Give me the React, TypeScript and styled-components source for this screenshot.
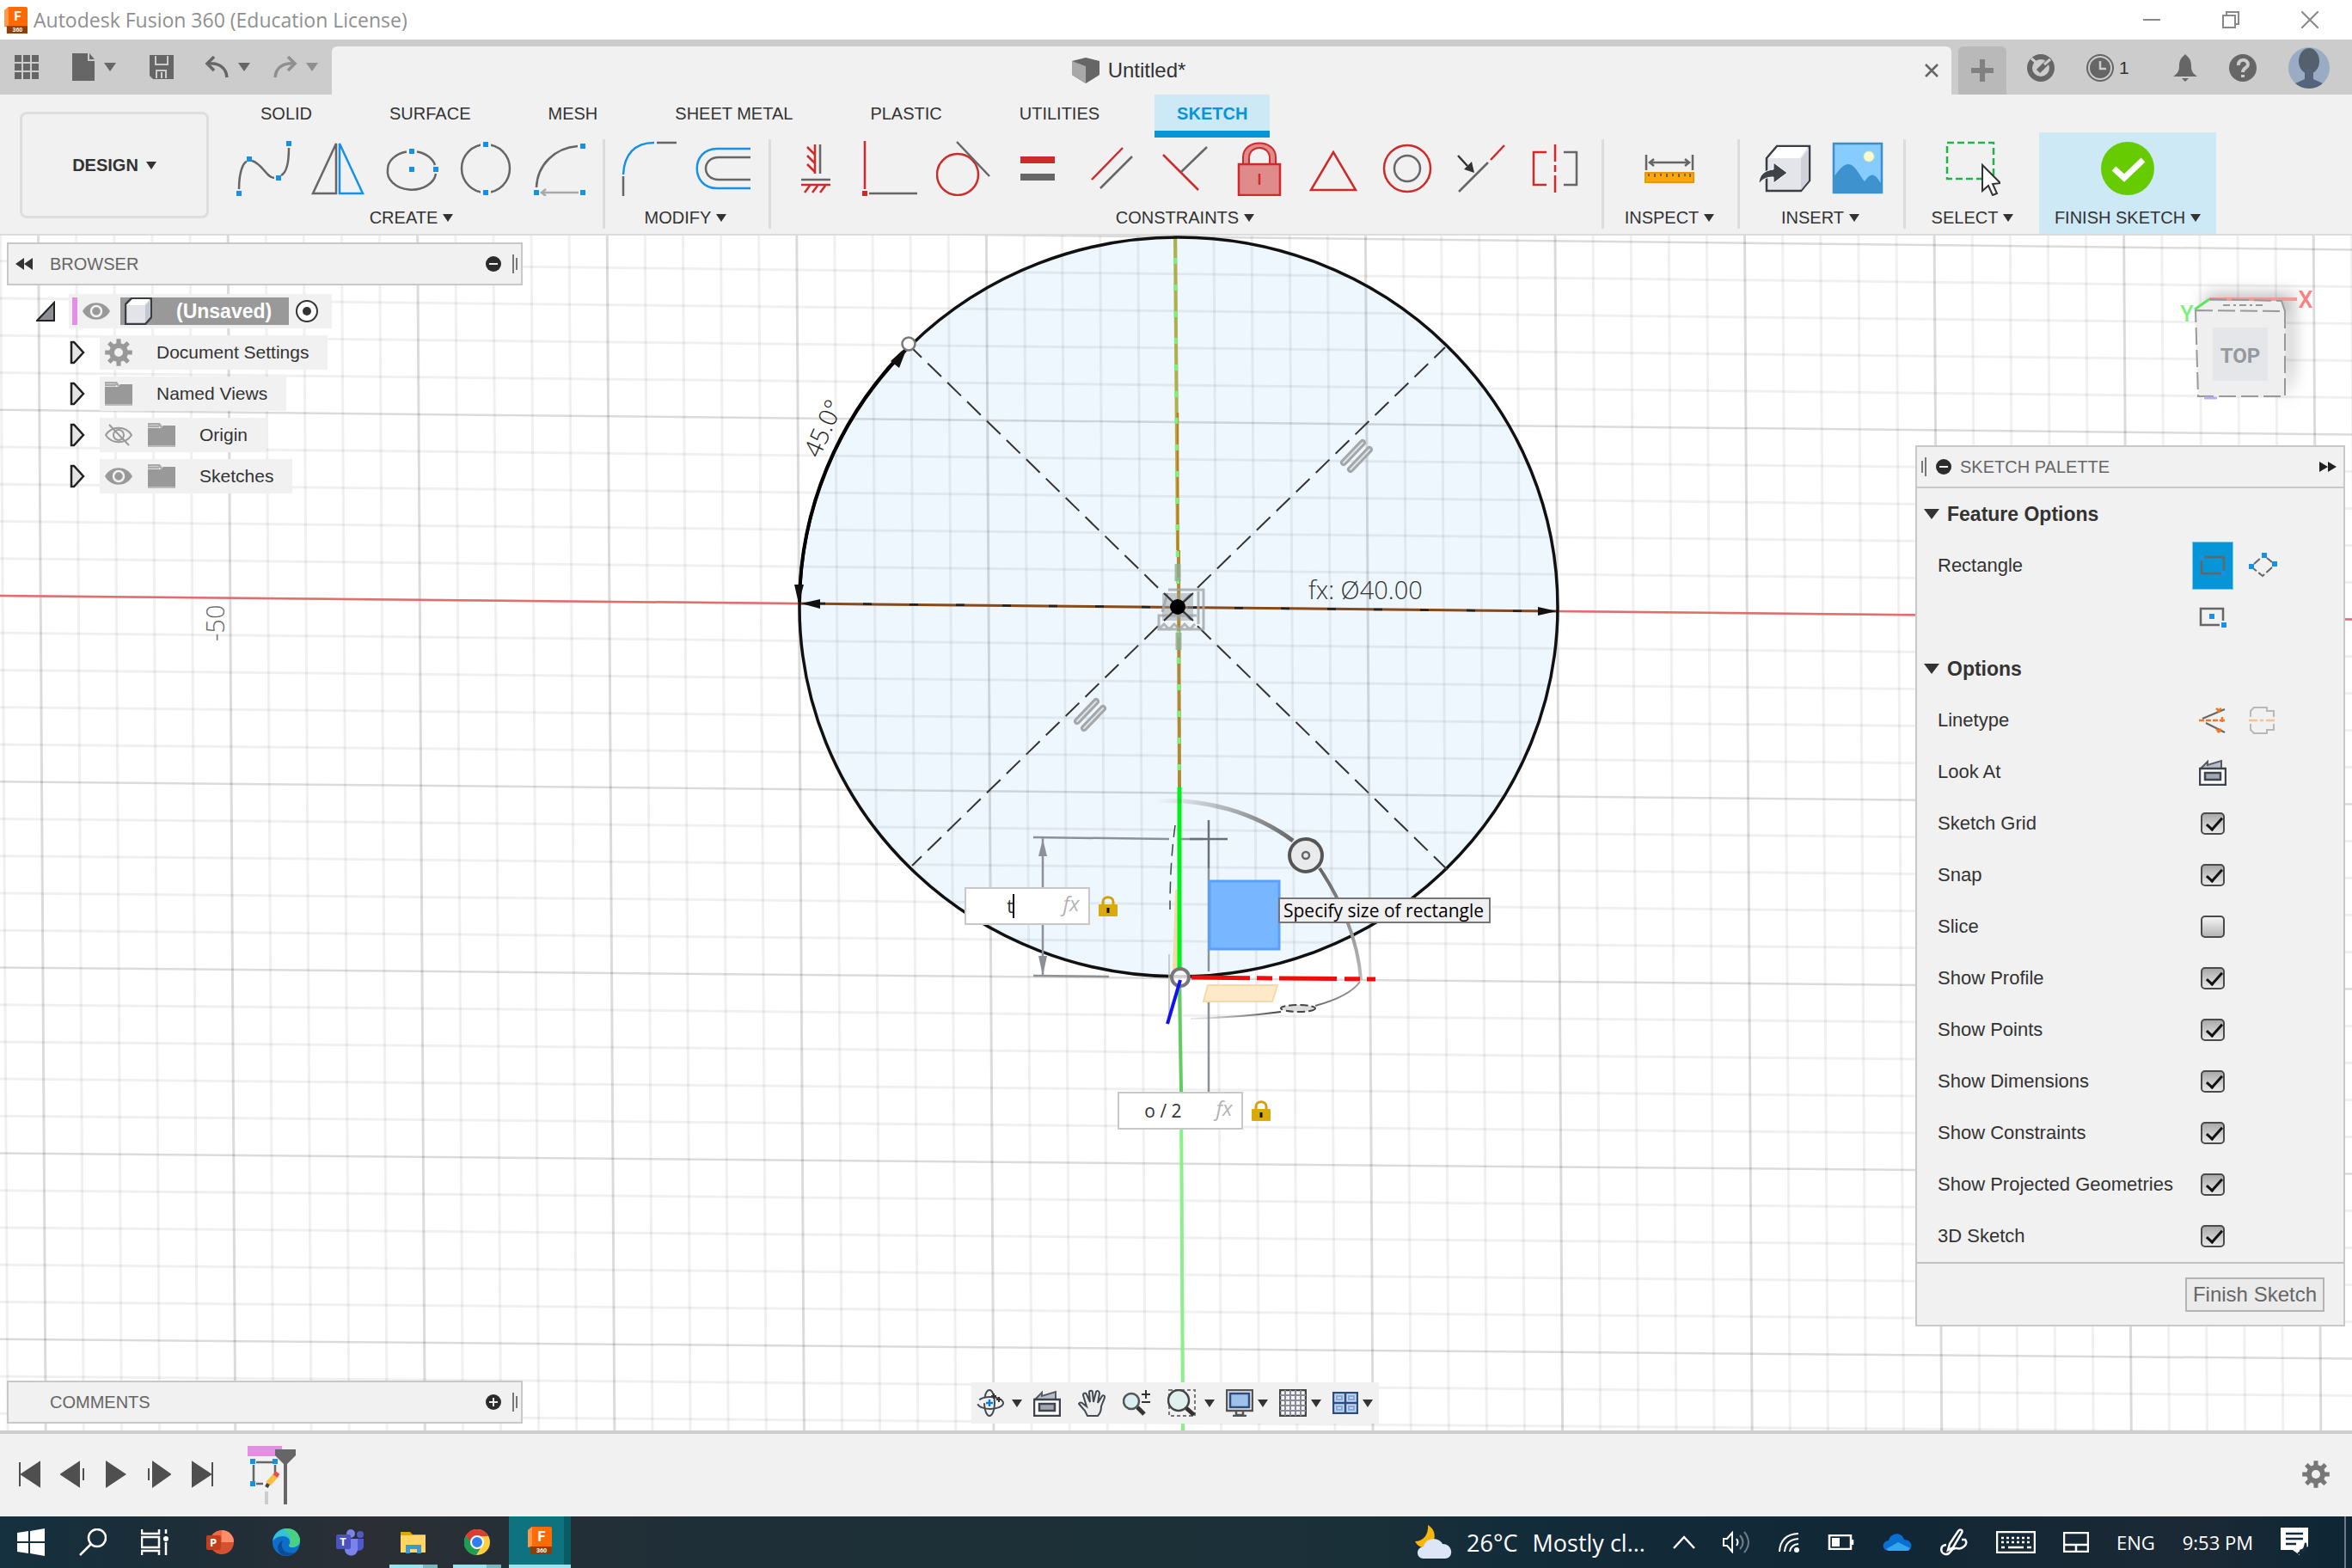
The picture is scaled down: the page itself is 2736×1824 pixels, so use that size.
import React from "react";
import styled, { createGlobalStyle, css } from "styled-components";

const UI = `"Liberation Sans", Arial, sans-serif`;
const SYS = `"Open Sans", "Noto Sans", sans-serif`;
const BLUE = "#1790e8";
const GREY = "#666";
const RED = "#cf2a2a";

const GlobalStyle = createGlobalStyle`
  * { box-sizing: border-box; }
  html, body { margin: 0; height: 100%; overflow: hidden; }
  button, input { font: inherit; color: inherit; margin: 0; padding: 0; border: 0; background: none; }
  svg { display: block; flex: none; }
`;

const Shell = styled.div`
  display: flex;
  flex-direction: column;
  height: 100vh;
  font-family: ${UI};
  font-size: 20px;
  color: #333;
  background: #f1f1f1;
`;

/* ---------- window frame ---------- */
const TitleBar = styled.header`
  display: flex;
  align-items: center;
  height: 46px;
  padding: 0 3px 0 5px;
  background: #fff;
`;
const AppTitle = styled.h1`
  flex: 1;
  margin: 0 0 0 7px;
  font: 400 23px/30px ${SYS};
  color: #8f8f8f;
`;
const WindowButton = styled.button`
  display: grid;
  place-items: center;
  width: 92px;
  height: 46px;
`;

const TabStrip = styled.div`
  display: flex;
  align-items: flex-end;
  height: 64px;
  background: #ccc;
`;
const QuickBar = styled.div`
  display: flex;
  align-items: center;
  width: 386px;
  height: 64px;
  padding-left: 16px;
`;
const QuickButton = styled.button<{ $w: number }>`
  display: flex;
  align-items: center;
  gap: 9px;
  width: ${(p) => p.$w}px;
  height: 56px;
`;
const DocTab = styled.div`
  flex: 1;
  display: flex;
  align-items: center;
  justify-content: center;
  gap: 10px;
  position: relative;
  height: 56px;
  background: #f1f1f1;
  border-radius: 6px 6px 0 0;
  font-size: 24px;
  padding-right: 30px;
`;
const DocClose = styled.button`
  position: absolute;
  right: 10px;
  top: 14px;
  width: 26px;
  height: 28px;
  display: grid;
  place-items: center;
`;
const NewTab = styled.button`
  display: grid;
  place-items: center;
  width: 56px;
  height: 56px;
  margin: 0 16px 0 8px;
  background: #b9b9b9;
  border-radius: 6px 6px 0 0;
`;
const Account = styled.div`
  display: flex;
  align-items: center;
  justify-content: space-between;
  width: 364px;
  height: 56px;
  margin-right: 22px;
  padding: 0 4px 6px 8px;
`;
const AccountButton = styled.button<{ $wide?: boolean }>`
  display: flex;
  align-items: center;
  gap: 6px;
  margin-right: ${(p) => (p.$wide ? 14 : 0)}px;
  font-size: 21px;
`;

/* ---------- ribbon ---------- */
const Ribbon = styled.div`
  display: flex;
  height: 164px;
  border-bottom: 2px solid #dcdcdc;
`;
const Workspace = styled.button`
  display: flex;
  align-items: center;
  justify-content: center;
  gap: 9px;
  width: 220px;
  height: 124px;
  margin: 20px 16px 0 23px;
  border: 3px solid #dedede;
  border-radius: 8px;
  font-weight: 700;
`;
const RibbonBody = styled.div`
  display: flex;
  flex-direction: column;
`;
const Tabs = styled.nav`
  display: flex;
  gap: 38px;
  height: 50px;
  padding-left: 18px;
`;
const Tab = styled.button<{ $active?: boolean }>`
  height: 50px;
  padding: 2px 26px 0;
  border-bottom: 8px solid transparent;
  ${(p) =>
    p.$active &&
    css`
      font-weight: 700;
      color: #0696d7;
      background: #cce9f5;
      border-color: #0696d7;
    `}
`;
const Groups = styled.div`
  display: flex;
  align-items: flex-start;
  height: 112px;
`;
const Group = styled.section<{ $w: number; $line?: boolean; $on?: boolean }>`
  display: flex;
  flex-direction: column;
  align-items: center;
  position: relative;
  width: ${(p) => p.$w}px;
  height: ${(p) => (p.$on ? 118 : 112)}px;
  margin-top: ${(p) => (p.$on ? -6 : 0)}px;
  padding-top: ${(p) => (p.$on ? 10 : 4)}px;
  padding-right: ${(p) => (p.$line ? 6 : 0)}px;
  background: ${(p) => (p.$on ? "#cce9f5" : "none")};
  ${(p) =>
    p.$line &&
    css`
      &::after {
        content: "";
        position: absolute;
        right: 0;
        top: 2px;
        bottom: 6px;
        width: 3px;
        background: #dcdcdc;
      }
    `}
`;
const Tools = styled.div`
  display: flex;
`;
const Tool = styled.button`
  display: grid;
  place-items: center;
  width: 86px;
  height: 64px;
`;
const GroupLabel = styled.button`
  display: flex;
  align-items: center;
  gap: 6px;
  height: 24px;
  margin-top: 13px;
`;
const Caret = styled.span<{ $c?: string; $s?: number }>`
  display: inline-block;
  width: 0;
  height: 0;
  border: ${(p) => p.$s ?? 5}px solid transparent;
  border-bottom: 0;
  border-top: ${(p) => (p.$s ?? 5) + 3}px solid ${(p) => p.$c ?? "#333"};
`;

/* ---------- canvas ---------- */
const Canvas = styled.main`
  flex: 1;
  position: relative;
  min-height: 0;
  overflow: hidden;
  background: #fff;
  border-bottom: 4px solid #ccc;
`;
const Drawing = styled.svg`
  position: absolute;
  left: 0;
  top: 0;
  width: 100%;
  height: 100%;
`;

const sidePanel = css`
  position: absolute;
  left: 8px;
  width: 600px;
`;
const Browser = styled.aside`
  ${sidePanel}
  top: 8px;
`;
const Comments = styled.aside`
  ${sidePanel}
  bottom: 8px;
`;
const PanelBar = styled.div`
  display: flex;
  align-items: center;
  height: 50px;
  padding: 0 3px 0 8px;
  border: 2px solid #c8c8c8;
  background: #f1f1f1;
  color: #666;
`;
const PanelTitle = styled.h2`
  flex: 1;
  margin: 0 0 0 20px;
  font-size: 20px;
  font-weight: 400;
`;
const CommentTitle = styled(PanelTitle)`
  margin-left: 40px;
`;
const BarButton = styled.button`
  display: grid;
  place-items: center;
  margin-right: 12px;
`;
const Tree = styled.ul`
  display: flex;
  flex-direction: column;
  gap: 8px;
  margin: 10px 0 0;
  padding: 0 0 0 72px;
  list-style: none;
  font-size: 21px;
`;
const RootRow = styled.li`
  display: flex;
  align-items: center;
  height: 40px;
  margin-left: -38px;
`;
const RootBody = styled.div`
  display: flex;
  align-items: center;
  gap: 6px;
  width: 306px;
  height: 40px;
  margin-left: 16px;
  padding-left: 4px;
  background: #f1f1f1;
`;
const RootMark = styled.span`
  width: 6px;
  height: 32px;
  background: #e38fe3;
`;
const RootName = styled.button`
  display: flex;
  align-items: center;
  gap: 28px;
  width: 196px;
  height: 32px;
  margin: 0 2px 0 6px;
  padding-left: 5px;
  background: #999;
  color: #fff;
  font-weight: 700;
  font-size: 23px;
`;
const Node = styled.li`
  display: flex;
  align-items: center;
  gap: 16px;
  height: 40px;
`;
const NodeBody = styled.button`
  display: flex;
  align-items: center;
  gap: 18px;
  height: 40px;
  padding: 0 22px 0 6px;
  background: #f1f1f1;
`;
const NodeName = styled.span`
  margin-left: 10px;
`;

/* ---------- sketch palette ---------- */
const Palette = styled.aside`
  position: absolute;
  right: 8px;
  top: 244px;
  width: 500px;
  border: 2px solid #c8c8c8;
  background: #f1f1f1;
  font-size: 22px;
`;
const PaletteBar = styled.div`
  display: flex;
  align-items: center;
  gap: 10px;
  height: 48px;
  padding: 0 8px 0 4px;
  border-bottom: 2px solid #c8c8c8;
  color: #666;
`;
const PaletteTitle = styled(PanelTitle)`
  margin: 0;
`;
const Heading = styled.button`
  display: flex;
  align-items: center;
  gap: 9px;
  width: 100%;
  height: 60px;
  padding-left: 8px;
  font-weight: 700;
  font-size: 23px;
`;
const Row = styled.div`
  display: grid;
  grid-template-columns: 291px 1fr;
  align-items: start;
  padding-left: 24px;
`;
const RowLabel = styled.label`
  line-height: 60px;
`;
const Cells = styled.div`
  display: grid;
  grid-template-columns: 58px 58px;
  grid-auto-rows: 60px;
`;
const Cell = styled.button<{ $on?: boolean }>`
  display: grid;
  place-items: center;
  place-self: center;
  width: 46px;
  height: 54px;
  ${(p) => p.$on && "background: #0696d7; outline: 1px solid #7cc7ea;"}
`;
const Check = styled.input`
  appearance: none;
  position: relative;
  place-self: center;
  width: 28px;
  height: 26px;
  border: 2px solid #4a4a4a;
  border-radius: 5px;
  background: linear-gradient(#f4f4f4, #b4b4b4);
  &:checked {
    background: linear-gradient(#a9a9a9, #e9e9e9);
  }
  &:checked::after {
    content: "";
    position: absolute;
    left: 9px;
    top: 0;
    width: 7px;
    height: 16px;
    border: solid #111;
    border-width: 0 3px 3px 0;
    transform: rotate(42deg);
  }
`;
const PaletteFooter = styled.div`
  display: flex;
  justify-content: flex-end;
  padding: 16px 22px 15px;
  border-top: 2px solid #c0c0c0;
`;
const FinishButton = styled.button`
  height: 40px;
  padding: 0 7px;
  border: 2px solid #b4b4b4;
  background: #ebebeb;
  color: #666;
  font-size: 24px;
`;

/* ---------- things pinned to the sketch ---------- */
const Pin = styled.div<{ $x: number; $y: number }>`
  position: absolute;
  left: ${(p) => p.$x}px;
  top: ${(p) => p.$y}px;
  display: flex;
  align-items: center;
  gap: 10px;
`;
const Field = styled.label`
  position: relative;
  display: flex;
  align-items: center;
  width: 146px;
  height: 44px;
  border: 2px solid #c8c8c8;
  background: #fff;
`;
const FieldInput = styled.input`
  width: 102px;
  height: 40px;
  text-align: center;
  font-family: ${SYS};
  font-size: 21px;
  outline: none;
`;
const Fx = styled.span`
  width: 40px;
  text-align: center;
  font: italic 24px/34px ${SYS};
  height: 40px;
  color: #b4b4b4;
`;
const TextCursor = styled.span`
  position: absolute;
  left: 54px;
  top: 6px;
  width: 2px;
  height: 28px;
  background: #000;
`;
const Tip = styled.div`
  height: 30px;
  padding: 0 6px 0 4px;
  border: 2px solid #767676;
  background: #f0f0f0;
  color: #000;
  font: 21px/26px ${SYS};
  white-space: nowrap;
`;
const NavBar = styled.div`
  position: absolute;
  left: 50%;
  bottom: 8px;
  margin-left: -238px;
  display: flex;
  align-items: center;
  width: 474px;
  height: 48px;
  padding-left: 6px;
  background: #f1f1f1;
`;
const NavButton = styled.button<{ $menu?: boolean; $wide?: boolean }>`
  display: flex;
  align-items: center;
  gap: ${(p) => (p.$wide ? 9 : 5)}px;
  margin-right: ${(p) => (p.$menu ? 13 : 20)}px;
`;

/* ---------- timeline ---------- */
const Timeline = styled.footer`
  display: flex;
  align-items: center;
  height: 96px;
  padding: 0 26px 2px 20px;
`;
const Playback = styled.div`
  display: flex;
  gap: 21px;
  width: 268px;
`;
const Spacer = styled.div`
  flex: 1;
`;

/* ---------- taskbar ---------- */
const Taskbar = styled.div`
  display: flex;
  height: 60px;
  background: linear-gradient(90deg, #15303f 0, #1a2e39 160px, #2b2f35 430px, #1f2f37 800px, #1a3038 1600px, #132c3a 1760px, #112735 2200px, #1b2935 2560px, #0f2735 2700px);
  color: #fff;
  font-family: ${SYS};
`;
const TaskButton = styled.button<{ $w: number; $on?: boolean }>`
  position: relative;
  display: grid;
  place-items: center;
  width: ${(p) => p.$w}px;
  height: 60px;
  ${(p) => p.$on && "background: linear-gradient(90deg, #0f737f 64px, #0b5b65 64px); border-bottom: 4px solid #9be4ee;"}
`;
const Running = styled.i`
  position: absolute;
  left: 9px;
  right: 9px;
  bottom: 0;
  height: 4px;
  background: linear-gradient(90deg, #9be4ee 70%, #7ab6be 70%);
`;
const Tray = styled.div`
  display: flex;
  align-items: center;
  gap: 32px;
  padding-right: 40px;
  border-right: 2px solid #6e7a83;
  margin-right: 7px;
`;
const Weather = styled.button`
  display: flex;
  align-items: center;
  gap: 17px;
  font-size: 27px;
`;
const TrayButton = styled.button`
  display: grid;
  place-items: center;
  height: 60px;
  font-size: 22px;
`;

/* ---------- icon helpers ---------- */
type IconProps = { w?: number; h?: number; children: React.ReactNode };
const Icon = ({ w = 64, h = w, children }: IconProps) => (
  <svg width={w} height={h} viewBox={`0 0 ${w} ${h}`} fill="none" stroke={GREY} strokeWidth="2.5" aria-hidden="true">
    {children}
  </svg>
);
const Dots = ({ at }: { at: [number, number][] }) => (
  <>
    {at.map(([x, y]) => (
      <rect key={`${x},${y}`} x={x - 3} y={y - 3} width="6" height="6" fill={BLUE} stroke="none" />
    ))}
  </>
);

const createTools: [string, React.ReactNode][] = [
  ["Spline", <><path d="M3 56C3 36 8 25 12 24M18 23C30 26 35 43 44 43M52 40C60 36 61 20 61 8" /><Dots at={[[3, 61], [15, 21], [49, 43], [61, 3]]} /></>],
  ["Mirror", <><path d="M30 3V61H3Z" /><path d="M34 3V61H61Z" stroke={BLUE} /></>],
  ["Ellipse", <><path d="M38 12.500A28 21 0 0 1 59 28M60 38A28 21 0 0 1 4 33A28 21 0 0 1 26 12.500" /><Dots at={[[32, 12], [32, 33], [60, 33]]} /></>],
  ["Circle", <><circle cx="32" cy="32" r="28" /><path d="M26 4H38M26 60H38" stroke="#f1f1f1" strokeWidth="5" /><Dots at={[[32, 4], [32, 60]]} /></>],
  ["Arc", <><path d="M5 54C6 28 26 8 53 6" /><path d="M12 60H54M16 56L11 60L16 64" stroke="#aaa" /><Dots at={[[5, 60], [59, 60], [59, 6]]} /></>],
];
const modifyTools: [string, React.ReactNode][] = [
  ["Fillet", <><path d="M2 39C3 16 15 2 38 2" stroke={BLUE} /><path d="M2 41V64M41 2H64" /></>],
  ["Offset", <><path d="M64 9H25C-6 9-6 55 25 55H64" stroke={BLUE} /><path d="M64 19H27C7 19 7 45 27 45H64" /></>],
];
const constraintTools: [string, React.ReactNode][] = [
  ["Horizontal/Vertical", <><path d="M31 4V38M22 7L31 16M22 17L31 26M22 27L31 36M15 51H49M19 60L25 52M28 60L34 52M37 60L43 52" stroke={RED} /><path d="M37 4V38M15 45H49" /></>],
  ["Coincident", <><path d="M3 0V56" stroke={RED} /><path d="M8 61H64" /><rect x="0" y="58" width="6" height="6" fill={RED} stroke="none" /></>],
  ["Tangent", <><circle cx="25" cy="39" r="24" stroke={RED} /><path d="M24 1L62 41" /></>],
  ["Equal", <><rect x="12" y="18" width="40" height="8" fill={RED} stroke="none" /><rect x="12" y="38" width="40" height="8" fill={GREY} stroke="none" /></>],
  ["Parallel", <><path d="M9 45L45 8" stroke={RED} /><path d="M19 55L56 18" /></>],
  ["Perpendicular", <><path d="M6 16L47 57" stroke={RED} /><path d="M27 36L57 7" /></>],
  ["Fix", <><path d="M13 27V19C13-3 51-3 51 19V27H44V20C44 4 20 4 20 20V27" stroke={RED} fill="#df8b8b" strokeWidth="2" /><rect x="8" y="27" width="48" height="36" stroke={RED} fill="#df8b8b" /><path d="M32 38V51" stroke={RED} /></>],
  ["Midpoint", <path d="M32 13L58 57H6Z" stroke={RED} />],
  ["Concentric", <><circle cx="32" cy="32" r="27" stroke={RED} /><circle cx="32" cy="32" r="15" /></>],
  ["Collinear", <><path d="M6 59L40 25" /><path d="M43 22L59 5" stroke={RED} /><path d="M5 17L16 29" stroke="#333" /><path d="M24 37L12 33L21 24Z" fill="#333" stroke="none" /></>],
  ["Symmetry", <><path d="M22 13H7V51H22M32 4V24M32 28V36M32 40V60" stroke={RED} /><path d="M42 13H57V51H42" /></>],
];
const measureTool: [string, React.ReactNode] = ["Measure", <><path d="M5 16V34M59 16V34M9 25H55M14 21L9 25L14 29M50 21L55 25L50 29" /><rect x="4" y="37" width="56" height="11" fill="#fda60a" stroke="#e8960a" strokeWidth="2" /><path d="M8 38V41M15 38V42M22 38V41M29 38V42M36 38V41M43 38V42M50 38V41M56 38V42" strokeWidth="2" /></>];
const insertTools: [string, React.ReactNode][] = [
  ["Insert Derive", <><path d="M12 20L24 6H62V46L52 58H12Z" fill="#e4e5ea" stroke="#3a3d44" /><path d="M14 20L25 7H60L51 20Z" fill="#fff" stroke="none" /><path d="M52 21L61 9V46L52 57Z" fill="#cfd0d8" stroke="none" /><path d="M3 50C3 40 9 34 20 33V25L36 37L20 49V42C13 42 7 44 3 50Z" fill="#3f4248" stroke="#fff" strokeWidth="1" /></>],
  ["Canvas", <><rect x="4" y="3" width="56" height="57" fill="#86ccff" stroke="#3b8fcb" /><path d="M4 60V42C10 34 15 27 21 27C29 27 34 40 40 47C44 41 48 38 51 40C55 42 57 47 60 50V60Z" fill="#3e93ce" stroke="none" /><circle cx="45" cy="18" r="6" fill="#fdfbd0" stroke="#d9edb8" strokeWidth="1" /></>],
];
const selectTool: [string, React.ReactNode] = ["Select", <><rect x="2" y="2" width="54" height="42" stroke="#21b24b" strokeDasharray="8 4" /><path d="M43 28V58L50 52L55 63L60 61L55 50L64 49Z" fill="#fff" stroke="#333" strokeWidth="2" /></>];
const finishTool: [string, React.ReactNode] = ["Finish Sketch", <><circle cx="32" cy="32" r="31" fill="#66cb00" stroke="none" /><path d="M16 32L28 43L50 22" stroke="#fff" strokeWidth="7" /></>];

const groups: { label: string; w: number; tools: [string, React.ReactNode][]; line?: boolean; on?: boolean }[] = [
  { label: "CREATE", w: 445, tools: createTools, line: true },
  { label: "MODIFY", w: 193, tools: modifyTools, line: true },
  { label: "CONSTRAINTS", w: 969, tools: constraintTools, line: true },
  { label: "INSPECT", w: 158, tools: [measureTool], line: true },
  { label: "INSERT", w: 193, tools: insertTools, line: true },
  { label: "SELECT", w: 155, tools: [selectTool] },
  { label: "FINISH SKETCH", w: 206, tools: [finishTool], on: true },
];
const tabs = ["SOLID", "SURFACE", "MESH", "SHEET METAL", "PLASTIC", "UTILITIES", "SKETCH"];

const FusionLogo = ({ s = 28 }: { s?: number }) => (
  <svg width={s} height={s + 4} viewBox="0 0 28 32" aria-hidden="true">
    <path d="M0 4L5 0H26Q28 0 28 2V32H3V24L0 23Z" fill="#ff6b00" />
    <path d="M0 4L5 0V22L0 24Z" fill="#ff9a4d" />
    <path d="M3 23H28V32H3Z" fill="#8f3f05" />
    <text x="16" y="17" fontSize="16" fontWeight="700" fill="#fff" textAnchor="middle" fontFamily="Roboto, sans-serif">F</text>
    <text x="16" y="30" fontSize="7" fontWeight="700" fill="#fff" textAnchor="middle" fontFamily="Roboto, sans-serif">360</text>
  </svg>
);
const Eye = ({ off }: { off?: boolean }) => (
  <Icon w={32} h={26}>
    {off ? (
      <>
        <path d="M1 13C8 2 24 2 31 13C24 24 8 24 1 13Z" stroke="#999" strokeWidth="2" />
        <circle cx="16" cy="13" r="6" stroke="#999" strokeWidth="2" />
        <path d="M5 1L28 25" stroke="#999" strokeWidth="2" />
      </>
    ) : (
      <>
        <path d="M0 13C7 0 25 0 32 13C25 26 7 26 0 13Z" fill="#999" stroke="none" />
        <circle cx="16" cy="13" r="6" stroke="#f1f1f1" strokeWidth="2.5" />
      </>
    )}
  </Icon>
);
const Folder = () => (
  <Icon w={32} h={28}>
    <path d="M0 1H13L16 5M0 1V4H13" stroke="#aaa" />
    <path d="M0 6H15L18 3H32V26H0Z" fill="#999" stroke="none" />
    <path d="M0 27H32" stroke="#bbb" strokeWidth="2" />
  </Icon>
);
const gearPath = (teeth: number, ro: number, ri: number, c: number) => {
  const pts: string[] = [];
  for (let i = 0; i < teeth; i++) {
    [[-0.3, ri], [-0.2, ro], [0.2, ro], [0.3, ri]].forEach(([f, r]) => {
      const a = ((i + f) / teeth) * Math.PI * 2;
      pts.push(`${(c + r * Math.sin(a)).toFixed(1)} ${(c - r * Math.cos(a)).toFixed(1)}`);
    });
  }
  return `M${pts.join("L")}Z`;
};
const Gear = ({ fill = "#999" }: { fill?: string }) => (
  <Icon w={32}>
    <path d={gearPath(8, 16, 11, 16)} fill={fill} stroke="none" />
    <circle cx="16" cy="16" r="5" fill="#f1f1f1" stroke="none" />
  </Icon>
);
const Expander = () => (
  <Icon w={20} h={28}><path d="M3 2H6L17 14L6 26H3Z" fill="#e4e4e6" stroke="#222" /></Icon>
);
const Grip = ({ flip }: { flip?: boolean }) => (
  <Icon w={8} h={24}><path d={flip ? "M6 1V23M2 5V19" : "M2 1V23M6 5V19"} stroke="#777" strokeWidth="2" /></Icon>
);
const Round = ({ plus }: { plus?: boolean }) => (
  <Icon w={18}><circle cx="9" cy="9" r="9" fill="#2b2b2b" stroke="none" /><path d={plus ? "M4 9H14M9 4V14" : "M4 9H14"} stroke="#eee" strokeWidth="2" /></Icon>
);
const Padlock = () => (
  <Icon w={22} h={24}><path d="M5 12V7C5 0 17 0 17 7V12" stroke="#d2a008" strokeWidth="3" /><rect y="10" width="22" height="14" rx="1" fill="#dba90b" stroke="none" /><path d="M11 14V20" stroke="#111" strokeWidth="3" /></Icon>
);
const LookAt = () => (
  <Icon w={32}><path d="M2 12L10 4V8L26 3V11" fill="#b9bdc8" stroke="#555a63" strokeWidth="2" /><rect x="1" y="12" width="30" height="19" fill="#fff" stroke="#3f434b" /><rect x="7" y="17" width="18" height="8" fill="#a3a7b2" stroke="#3f434b" /></Icon>
);

/* ---------- sketch drawing ---------- */
const gridV = Array.from({ length: 64 }, (_, n) => n);
const gridH = Array.from({ length: 36 }, (_, n) => n - 10);
const EqualMark = ({ x, y }: { x: number; y: number }) => (
  <g transform={`translate(${x} ${y})`} strokeLinecap="round">
    <path d="M4 27L26 4M12 35L34 12" stroke="#a3a7a9" strokeWidth="8" />
    <path d="M4 27L26 4M12 35L34 12" stroke="#dbe3e8" strokeWidth="2" />
  </g>
);
const Sketch = () => (
  <Drawing viewBox="0 274 2736 1390" preserveAspectRatio="xMinYMin slice" fill="none">
    <defs>
      <filter id="soft" x="-50%" y="-50%" width="200%" height="200%"><feGaussianBlur stdDeviation="9" /></filter>
      <linearGradient id="arc" x1="1345" y1="930" x2="1504" y2="978" gradientUnits="userSpaceOnUse"><stop stopColor="#777" stopOpacity="0" /><stop offset="1" stopColor="#666" /></linearGradient>
      <linearGradient id="arc2" x1="1535" y1="1010" x2="1582" y2="1140" gradientUnits="userSpaceOnUse"><stop stopColor="#666" /><stop offset="1" stopColor="#bbb" /></linearGradient>
      <linearGradient id="arc3" x1="1582" y1="1142" x2="1385" y2="1185" gradientUnits="userSpaceOnUse"><stop stopColor="#999" /><stop offset="0.5" stopColor="#444" /><stop offset="1" stopColor="#999" stopOpacity="0.2" /></linearGradient>
    </defs>
    <ellipse cx="1371" cy="706" rx="441" ry="430" fill="#eff7fe" />
    {gridV.map((n) => {
      const x = 0.5 + n * 44.11;
      return <path key={n} d={`M${x} 274L${x + 8.6} 1664`} stroke="#000" strokeOpacity={n % 5 === 1 ? 0.14 : 0.06} strokeWidth="3" />;
    })}
    {gridH.map((n) => (
      <path key={n} d={`M0 ${693 + n * 43.24}L2736 ${720.5 + n * 43}`} stroke="#000" strokeOpacity={n % 5 === 0 ? 0.14 : 0.06} strokeWidth={n % 5 === 0 ? 2.5 : 3} />
    ))}
    <path d="M0 693L930 702M1812 711L2736 720.5" stroke="#e26d6d" strokeWidth="2.5" />
    <path d="M930 702L1812 711" stroke="#8a4a18" strokeWidth="3" />
    <path d="M950 702L1790 711" stroke="#222" strokeWidth="2.5" strokeDasharray="10 44" />
    <path d="M1367 274L1370 640" stroke="#aeb04a" strokeWidth="4" />
    <path d="M1370 480L1370 640M1371 770L1372 920" stroke="#c07d1c" strokeWidth="2.5" />
    <path d="M1371 640L1372 920" stroke="#b08a30" strokeWidth="4" />
    <path d="M1367 300L1372 930" stroke="#7ef07e" strokeWidth="4" strokeDasharray="7 24" />
    <path d="M1372 1148L1374 1270" stroke="#5fce5f" strokeWidth="4" />
    <path d="M1374 1270L1376 1664" stroke="#8af08a" strokeWidth="4" />
    <ellipse cx="1371" cy="706" rx="441" ry="430" stroke="#111" strokeWidth="3.5" />
    <g stroke="#333" strokeWidth="2" strokeDasharray="22 10">
      <path d="M1370 706L1058 402M1370 706L1681 404M1370 706L1061 1007M1370 706L1684 1012" />
    </g>
    <path d="M930 700A441 430 0 0 1 1050 410" stroke="#000" strokeWidth="4" />
    <path d="M1056 402L1046 428L1036 420ZM929 702L924 680H935ZM932 702L954 697V708ZM1811 711L1789 706V716Z" fill="#111" />
    <circle cx="1057" cy="400" r="7.500" fill="#fff" stroke="#777" strokeWidth="2.5" />

    <EqualMark x={1559} y={511} />
    <EqualMark x={1249} y={812} />
    <g stroke="#a0a4a6" strokeWidth="3">
      <path d="M1359 686H1400V732H1348V716H1392M1394 688V726M1348 732L1354 726L1360 732L1366 726L1372 732L1378 726L1384 732L1390 726M1352 712L1358 690" strokeOpacity="0.8" />
      <path d="M1370 656V676M1371 736V756" stroke="#8fae92" strokeWidth="7" strokeOpacity="0.8" />
    </g>
    <path d="M1352 690H1388V722H1352Z" fill="#9aa0a2" fillOpacity="0.5" />
    <path d="M1354 690L1388 722M1388 690L1354 722" stroke="#333" strokeWidth="2" />
    <circle cx="1370" cy="706" r="9" fill="#000" />

    <g stroke="#8b9196" strokeWidth="2.5">
      <path d="M1202 974L1360 976M1372 976H1400M1202 1135L1290 1136M1213 975V1135" />
      <path d="M1384 976H1428M1406 954V1010" stroke="#6a7075" />
      <path d="M1406 1010V1130M1406 1149V1270" />
    </g>
    <path d="M1213 976L1218 996H1208ZM1213 1135L1218 1112H1208Z" fill="#8b9196" />
    <path d="M1367 960C1363 990 1361 1020 1361 1058" stroke="#444" strokeWidth="1.5" strokeDasharray="14 8" />
    <path d="M1367 1035H1372V1130H1364Z" fill="#f6d9a8" />
    <path d="M1372 916V1126" stroke="#00f01a" strokeWidth="5" />
    <path d="M1360 1110V1190" stroke="#bbb" strokeWidth="1.5" />

    <path d="M1345 932C1400 928 1460 945 1504 978" stroke="url(#arc)" strokeWidth="5" />
    <path d="M1535 1010C1558 1044 1580 1092 1583 1140" stroke="url(#arc2)" strokeWidth="4" />
    <path d="M1582 1142C1572 1156 1552 1164 1530 1170M1490 1177C1460 1181 1430 1184 1385 1185" stroke="url(#arc3)" strokeWidth="2" />
    <ellipse cx="1510" cy="1173" rx="20" ry="4" stroke="#444" strokeWidth="2" strokeDasharray="9 4" fill="#ddd" />
    <circle cx="1519" cy="995" r="19" fill="#e8eaec" stroke="#555" strokeWidth="4" />
    <circle cx="1519" cy="995" r="4" stroke="#666" strokeWidth="2.5" />
    <rect x="1407" y="1025" width="81" height="79" fill="#78b6ff" stroke="#5aa0fb" strokeWidth="3" />
    <path d="M1405 1146H1486L1480 1165H1400Z" fill="#feeac8" stroke="#f6d9a8" strokeWidth="2" />
    <path d="M1386 1137L1600 1139" stroke="#f10b0b" strokeWidth="5" strokeDasharray="68 8 18 8 67 9 18 8 12" />
    <circle cx="1373" cy="1137" r="10" fill="#fff" fillOpacity="0.8" stroke="#777" strokeWidth="4" />
    <path d="M1373 1140L1358 1191" stroke="#1111f5" strokeWidth="4" />

    <g fontFamily={SYS} fontSize="29" fontWeight="300" fill="#333">
      <text x="1522" y="697">fx: Ø40.00</text>
      <text transform="translate(953 534) rotate(-66)" fill="#222">45.0°</text>
      <text transform="translate(261 746) rotate(-90)" fill="#666">-50</text>
    </g>

    <g>
      <path d="M2570 342H2668V430L2658 470V362H2560Z" fill="#000" fillOpacity="0.28" filter="url(#soft)" />
      <path d="M2570 348L2654 350L2658 362V461L2557 461L2553 361Z" fill="#efefef" />
      <path d="M2574 381H2638V443H2574Z" fill="#e5e6e9" />
      <path d="M2570 348H2672" stroke="#f29a9a" strokeWidth="4" />
      <path d="M2554 361L2658 362V461H2557ZM2570 348L2654 350L2658 362" stroke="#999" strokeWidth="2" strokeDasharray="20 6" />
      <path d="M2586 355H2634" stroke="#999" strokeWidth="2" strokeDasharray="8 4 3 4" />
      <path d="M2570 348L2553 360" stroke="#5be65b" strokeWidth="3" />
      <path d="M2564 463H2579" stroke="#b3b0fa" strokeWidth="3" />
      <g fontFamily="Roboto, sans-serif" textAnchor="middle" fontWeight="700">
        <text x="2606" y="422" fontSize="24" fill="#9498a0">TOP</text>
        <text x="2682" y="358" fontSize="27" fontWeight="500" fill="#fb8080">X</text>
        <text x="2544" y="374" fontSize="25" fontWeight="500" fill="#7cf07c">Y</text>
      </g>
    </g>
  </Drawing>
);

const treeNodes = [
  { name: "Document Settings", icons: [<Gear key="g" />] },
  { name: "Named Views", icons: [<Folder key="f" />] },
  { name: "Origin", icons: [<Eye key="e" off />, <Folder key="f" />] },
  { name: "Sketches", icons: [<Eye key="e" />, <Folder key="f" />] },
];
const options: [string, boolean][] = [
  ["Sketch Grid", true], ["Snap", true], ["Slice", false], ["Show Profile", true], ["Show Points", true],
  ["Show Dimensions", true], ["Show Constraints", true], ["Show Projected Geometries", true], ["3D Sketch", true],
];

type NavTool = { name: string; menu?: boolean; wide?: boolean; art: React.ReactNode };
const navTools: NavTool[] = [
  { name: "Orbit", menu: true, wide: true, art: <Icon w={32}><ellipse cx="16" cy="16" rx="15" ry="7" stroke="#444951" strokeWidth="2" strokeDasharray="34 6" /><ellipse cx="15" cy="16" rx="6" ry="15" stroke="#444951" strokeWidth="2" strokeDasharray="34 6" /><path d="M15 12V20M11 16H19" stroke="#0a7be0" /><path d="M20 5V11M17 8H23M26 9V15M23 12H29" stroke="#333" strokeWidth="2" /></Icon> },
  { name: "Look At", art: <LookAt /> },
  { name: "Pan", art: <Icon w={32}><path d="M11 31L8 25L1 17C2 15 4 15 6 17L10 20L6 7C6 4 9 4 10 6L14 15L13 4C13 1 17 1 17 4L18 15L21 3C22 1 25 2 25 5L23 16L28 8C29 6 32 8 31 10L27 20C27 25 26 28 23 31Z" fill="#eceded" stroke="#444951" strokeWidth="2" /></Icon> },
  { name: "Zoom", art: <Icon w={32}><circle cx="10" cy="14" r="9" fill="#dceff0" stroke="#555" /><path d="M17 21L25 29" stroke="#333" strokeWidth="5" /><path d="M27 1V11M22 6H32M22 15H32" stroke="#333" strokeWidth="2" /></Icon> },
  { name: "Zoom Window", menu: true, wide: true, art: <Icon w={34} h={32}><rect x="2" y="1" width="30" height="30" stroke="#777" strokeWidth="2" strokeDasharray="4 3" /><circle cx="13" cy="13" r="12" fill="#dff0ee" stroke="#444" /><path d="M22 22L31 30" stroke="#333" strokeWidth="5" /></Icon> },
  { name: "Display Settings", menu: true, art: <Icon w={32}><path d="M8 31H24M12 25V30H20V25" stroke="#555" /><rect x="1" y="1" width="30" height="24" fill="#eee" stroke="#555" /><rect x="5" y="5" width="22" height="16" fill="#9fc0e8" stroke="#2e4c7f" /></Icon> },
  { name: "Grid and Snaps", menu: true, art: <Icon w={32}><rect x="1" y="1" width="30" height="30" fill="#f4f4f6" stroke="#444" /><path d="M7 1V31M13 1V31M19 1V31M25 1V31M1 7H31M1 13H31M1 19H31M1 25H31" stroke="#888c99" strokeWidth="2" /></Icon> },
  { name: "Viewports", menu: true, art: <Icon w={30} h={26}><rect x="1" y="1" width="28" height="24" fill="#c4d8f1" stroke="#2e4c7f" /><path d="M15 1V25M1 13H29" stroke="#2e4c7f" /><path d="M5 5H11V9H5ZM19 5H25V9H19ZM5 17H11V21H5ZM19 17H25V21H19Z" stroke="#85a9d6" strokeWidth="2" /></Icon> },
];

const taskApps: { name: string; w: number; on?: boolean; run?: boolean; icon: React.ReactNode }[] = [
  { name: "Start", w: 72, icon: <Icon w={32}><path d="M0 5L13 3V15H0ZM15 3L32 0V15H15ZM0 17H13V29L0 27ZM15 17H32V32L15 29Z" fill="#fff" stroke="none" /></Icon> },
  { name: "Search", w: 72, icon: <Icon w={32}><circle cx="21" cy="11" r="10" stroke="#fff" /><path d="M14 18L1 31" stroke="#fff" /></Icon> },
  { name: "Task View", w: 72, icon: <Icon w={32}><path d="M1 1V6H21V1M1 31V26H21V31M1 10H21V22H1ZM29 1V6M29 16V31" stroke="#fff" /><circle cx="29" cy="12" r="3" fill="#fff" stroke="none" /></Icon> },
  { name: "PowerPoint", w: 80, icon: <Icon w={32}><circle cx="18" cy="16" r="14" fill="#d35230" stroke="none" /><path d="M18 2A14 14 0 0 1 32 16H18Z" fill="#ff8f6b" stroke="none" /><path d="M18 2V16H4A14 14 0 0 1 18 2Z" fill="#ed6c47" stroke="none" /><rect x="0" y="8" width="17" height="17" rx="2" fill="#c43e1c" stroke="none" /><text x="8" y="21" fontSize="13" fontWeight="700" fill="#fff" stroke="none" textAnchor="middle">P</text></Icon> },
  { name: "Edge", w: 74, icon: <Icon w={32}><circle cx="16" cy="16" r="16" fill="#0d6fc9" stroke="none" /><path d="M0 15C2 4 10 0 17 0C27 0 32 8 32 14C32 20 27 22 23 22C19 22 18 20 20 18C22 14 18 9 12 9C6 9 2 12 0 15Z" fill="#35c1d6" stroke="none" /><path d="M17 0C27 0 32 8 32 14C32 20 27 22 23 22C19 22 18 20 20 18C22 10 20 5 12 1Z" fill="#4fd66a" fillOpacity="0.75" stroke="none" /><path d="M12 14C8 22 14 31 26 28C22 32 14 33 9 29C4 24 6 16 12 14Z" fill="#0b4d95" stroke="none" /></Icon> },
  { name: "Teams", w: 74, icon: <Icon w={32}><circle cx="17" cy="6" r="5" fill="#7b83eb" stroke="none" /><circle cx="28" cy="7" r="4" fill="#5059c9" stroke="none" /><path d="M22 12H32V20C32 26 26 27 22 25Z" fill="#5059c9" stroke="none" /><path d="M10 12H25V24C25 34 10 34 10 24Z" fill="#7b83eb" stroke="none" /><rect x="0" y="7" width="17" height="17" rx="2" fill="#4b53bc" stroke="none" /><text x="8" y="20" fontSize="13" fontWeight="700" fill="#fff" stroke="none" textAnchor="middle">T</text></Icon> },
  { name: "File Explorer", w: 74, run: true, icon: <Icon w={30} h={26}><path d="M0 1H11L14 4H29V12H0Z" fill="#e0a50c" stroke="none" /><rect y="5" width="29" height="20" fill="#ffd763" stroke="none" /><path d="M6 26V16H24V26H19V21H11V26Z" fill="#3e97dc" stroke="none" /></Icon> },
  { name: "Chrome", w: 74, run: true, icon: <Icon w={30}><circle cx="15" cy="15" r="15" fill="#ffcd40" stroke="none" /><path d="M2 7A15 15 0 0 1 28 8H15L8 18Z" fill="#dd3c31" stroke="none" /><path d="M2 7A15 15 0 0 0 14 30L20 20L9 18Z" fill="#1f9d55" stroke="none" /><circle cx="15" cy="15" r="7" fill="#2d7ef0" stroke="#fff" strokeWidth="2" /></Icon> },
  { name: "Fusion 360", w: 72, on: true, icon: <FusionLogo s={28} /> },
];

const W = { stroke: "#fff" };
const trayIcons: [string, React.ReactNode][] = [
  ["Show hidden icons", <Icon w={26} h={16}><path d="M1 15L13 2L25 15" {...W} /></Icon>],
  ["Volume", <Icon w={32} h={26}><path d="M1 9H5L11 2V24L5 17H1Z" {...W} strokeWidth="2" /><path d="M16 9Q19 13 16 17" {...W} strokeWidth="2" /><path d="M20 5Q27 13 20 21M25 1Q35 13 25 25" stroke="#6f7f8a" strokeWidth="2" /></Icon>],
  ["Wi-Fi", <Icon w={26} h={24}><circle cx="22" cy="21" r="3" fill="#fff" stroke="none" /><path d="M14 23Q15 15 24 14M8 23Q9 9 24 8M2 23Q3 3 24 2" {...W} strokeWidth="2" /></Icon>],
  ["Battery", <Icon w={32} h={18}><path d="M2 1H27V17H2ZM29 6V12" {...W} /><rect x="5" y="4" width="9" height="10" fill="#fff" stroke="none" /></Icon>],
  ["OneDrive", <Icon w={34} h={22}><path d="M7 21C-2 20-1 10 7 9C9 0 22-2 25 8C35 8 36 20 28 21Z" fill="#0a6fd0" stroke="none" /><path d="M4 19L18 11L32 18C31 20 30 21 28 21H7Z" fill="#2fa8ee" stroke="none" /></Icon>],
  ["Windows Ink", <Icon w={34} h={32}><path d="M12 18L22 3C24 0 28 2 26 5L16 22L10 25ZM8 19C0 20 1 29 7 30C14 31 12 22 20 23C27 25 34 18 30 13L26 13" {...W} /></Icon>],
  ["Touch keyboard", <Icon w={46} h={26}><rect x="1" y="1" width="44" height="24" {...W} /><path d="M6 8H41M6 13H41" {...W} strokeDasharray="3 3" /><path d="M6 19H10M14 19H32M36 19H41" {...W} /></Icon>],
  ["Touchpad", <Icon w={30} h={24}><path d="M1 1H29V23H1ZM1 15H29M15 15V23" {...W} /></Icon>],
];

export default function App() {
  return (
    <Shell>
      <GlobalStyle />
      <TitleBar>
        <FusionLogo s={27} />
        <AppTitle>Autodesk Fusion 360 (Education License)</AppTitle>
        <WindowButton aria-label="Minimize"><Icon w={20}><path d="M0 10H20" stroke="#888" strokeWidth="2" /></Icon></WindowButton>
        <WindowButton aria-label="Restore"><Icon w={20}><path d="M1 5H15V19H1ZM5 5V1H19V15H15" stroke="#888" strokeWidth="2" /></Icon></WindowButton>
        <WindowButton aria-label="Close"><Icon w={20}><path d="M0 0L20 20M20 0L0 20" stroke="#888" strokeWidth="2" /></Icon></WindowButton>
      </TitleBar>

      <TabStrip>
        <QuickBar>
          <QuickButton $w={66} aria-label="Data Panel"><Icon w={30} h={28}>{[0, 10, 20].map((y) => [1, 11, 21].map((x) => <rect key={`${x}-${y}`} x={x} y={y} width="8" height="8" fill={GREY} stroke="none" />))}</Icon></QuickButton>
          <QuickButton $w={92} aria-label="File"><Icon w={30} h={32}><path d="M2 0H20V9H28V32H2ZM22 0L28 7H22Z" fill={GREY} stroke="none" /></Icon><Caret $c={GREY} $s={7} /></QuickButton>
          <QuickButton $w={64} aria-label="Save"><Icon w={28}><path d="M0 0H28V28H4L0 24Z" fill={GREY} stroke="none" /><path d="M7 1V11H21V1M8 27V18H19V27M14 20V27" stroke="#ccc" strokeWidth="2" /></Icon></QuickButton>
          <QuickButton $w={79} aria-label="Undo"><Icon w={30} h={26}><path d="M11 1L3 9L11 17M4 9C16 8 25 13 26 25" strokeWidth="3.5" /></Icon><Caret $c={GREY} $s={7} /></QuickButton>
          <QuickButton $w={66} aria-label="Redo"><Icon w={30} h={26}><path d="M18 1L26 9L18 17M25 9C13 8 4 13 3 25" stroke="#8f8f8f" strokeWidth="3.5" /></Icon><Caret $c="#8f8f8f" $s={7} /></QuickButton>
        </QuickBar>
        <DocTab>
          <Icon w={32}><path d="M16 1L32 5V21L16 31L0 21V5Z" fill="#666" stroke="none" /><path d="M0 5L16 11V31L0 21Z" fill="#a8a8a8" stroke="none" /></Icon>
          Untitled*
          <DocClose aria-label="Close document"><Icon w={16}><path d="M1 1L15 15M15 1L1 15" /></Icon></DocClose>
        </DocTab>
        <NewTab aria-label="New document"><Icon w={26}><path d="M13 0V26M0 13H26" stroke="#808080" strokeWidth="6" /></Icon></NewTab>
        <Account>
          <AccountButton aria-label="Extensions"><Icon w={32}><circle cx="16" cy="16" r="13" strokeWidth="6" /><path d="M13 20L25 8" strokeWidth="6" /><path d="M5 5L11 10M20 12L27 6" stroke="#ccc" strokeWidth="3" /></Icon></AccountButton>
          <AccountButton $wide aria-label="Job status"><Icon w={32}><circle cx="16" cy="16" r="15" strokeWidth="2" /><circle cx="16" cy="16" r="12" fill={GREY} stroke="none" /><path d="M16 8V17H23" stroke="#ccc" /></Icon>1</AccountButton>
          <AccountButton aria-label="Notifications"><Icon w={28} h={32}><path d="M14 0C10 4 7 6 7 14C7 21 4 23 0 26H28C24 23 21 21 21 14C21 6 18 4 14 0Z" fill={GREY} stroke="none" /><path d="M10 28H18L14 32Z" fill={GREY} stroke="none" /></Icon></AccountButton>
          <AccountButton aria-label="Help"><Icon w={32}><circle cx="16" cy="16" r="16" fill={GREY} stroke="none" /><path d="M11 13C10 5 22 5 22 12C22 16 16 16 16 21M16 24V27" stroke="#ccc" strokeWidth="4" /></Icon></AccountButton>
          <AccountButton aria-label="Account"><Icon w={48}><clipPath id="av"><circle cx="24" cy="24" r="24" /></clipPath><g clipPath="url(#av)" stroke="none"><rect width="48" height="48" fill="#9aacc4" /><ellipse cx="24" cy="16" rx="12" ry="15" fill="#55606f" /><path d="M19 26H29V37L40 42V48H8V42L19 37Z" fill="#55647b" /></g></Icon></AccountButton>
        </Account>
      </TabStrip>

      <Ribbon>
        <Workspace>DESIGN <Caret $s={6} /></Workspace>
        <RibbonBody>
          <Tabs>
            {tabs.map((t) => <Tab key={t} $active={t === "SKETCH"}>{t}</Tab>)}
          </Tabs>
          <Groups>
            {groups.map((g) => (
              <Group key={g.label} $w={g.w} $line={g.line} $on={g.on}>
                <Tools>
                  {g.tools.map(([name, art]) => <Tool key={name} aria-label={name}><Icon>{art}</Icon></Tool>)}
                </Tools>
                <GroupLabel>{g.label}<Caret $s={6} /></GroupLabel>
              </Group>
            ))}
          </Groups>
        </RibbonBody>
      </Ribbon>

      <Canvas>
        <Sketch />

        <Browser>
          <PanelBar>
            <Icon w={20} h={14}><path d="M10 0V14L0 7ZM20 0V14L10 7Z" fill="#333" stroke="none" /></Icon>
            <PanelTitle>BROWSER</PanelTitle>
            <BarButton aria-label="Collapse browser"><Round /></BarButton>
            <Grip />
          </PanelBar>
          <Tree>
            <RootRow>
              <Icon w={22} h={24}><path d="M21 2V23H1Z" fill="#8d8f94" stroke="#222" strokeWidth="2" /></Icon>
              <RootBody>
                <RootMark />
                <Eye />
                <RootName>
                  <Icon w={32}><path d="M1 8L8 1H31V23L24 31H1Z" fill="#e3e4ea" stroke="#3a3d44" /><path d="M2 9L9 2H29L23 9Z" fill="#fff" stroke="none" /><path d="M24 9L30 3V22L24 29Z" fill="#c4c6d0" stroke="none" /></Icon>
                  (Unsaved)
                </RootName>
                <Icon w={26}><circle cx="13" cy="13" r="12" fill="#fff" stroke="#333" strokeWidth="2" /><circle cx="13" cy="13" r="5" fill="#333" stroke="none" /></Icon>
              </RootBody>
            </RootRow>
            {treeNodes.map((n) => (
              <Node key={n.name}>
                <Expander />
                <NodeBody>{n.icons}<NodeName>{n.name}</NodeName></NodeBody>
              </Node>
            ))}
          </Tree>
        </Browser>

        <Pin $x={1122} $y={758}>
          <Field><FieldInput aria-label="Height" defaultValue="t" /><TextCursor /><Fx>fx</Fx></Field>
          <Padlock />
        </Pin>
        <Pin $x={1300} $y={996}>
          <Field><FieldInput aria-label="Width" defaultValue="o / 2" /><Fx>fx</Fx></Field>
          <Padlock />
        </Pin>
        <Pin $x={1487} $y={770}><Tip role="tooltip">Specify size of rectangle</Tip></Pin>

        <Palette>
          <PaletteBar>
            <Grip flip />
            <Round />
            <PaletteTitle>SKETCH PALETTE</PaletteTitle>
            <Icon w={20} h={12}><path d="M0 0V12L10 6ZM10 0V12L20 6Z" fill="#222" stroke="none" /></Icon>
          </PaletteBar>
          <Heading><Caret $s={9} />Feature Options</Heading>
          <Row>
            <RowLabel as="span">Rectangle</RowLabel>
            <Cells>
              <Cell $on aria-label="2-Point Rectangle"><Icon w={32} h={24}><rect x="3" y="2" width="26" height="19" stroke="#666" /><Dots at={[[3, 3], [29, 21]]} /></Icon></Cell>
              <Cell aria-label="3-Point Rectangle"><Icon w={34} h={32}><path d="M7 14L15 7M22 7L28 12M28 18L17 28L6 19" strokeDasharray="9 3" strokeWidth="2" /><Dots at={[[4, 17], [19, 4], [31, 14]]} /></Icon></Cell>
              <Cell aria-label="Center Rectangle"><Icon w={32} h={24}><path d="M24 21H2V2H28V16" /><Dots at={[[15, 11], [29, 21]]} /></Icon></Cell>
            </Cells>
          </Row>
          <Heading><Caret $s={9} />Options</Heading>
          <Row>
            <RowLabel as="span">Linetype</RowLabel>
            <Cells>
              <Cell aria-label="Construction"><Icon w={32}><path d="M4 14L30 3M8 19L30 30" strokeWidth="2" /><path d="M0 16H32M27 12V20M20 2L26 7M26 2L20 7M20 26L26 31M26 26L20 31" stroke="#ec7a2b" strokeDasharray="6 2" /></Icon></Cell>
              <Cell aria-label="Centerline"><Icon w={32}><path d="M2 12V5L6 1H21V5H29V12M2 20V27L6 31H21V27H29V20" stroke="#b8b8b8" strokeWidth="2" /><path d="M0 16H32" stroke="#f3c39a" strokeDasharray="10 3 4 3" /></Icon></Cell>
            </Cells>
          </Row>
          <Row>
            <RowLabel as="span">Look At</RowLabel>
            <Cells><Cell aria-label="Look At"><LookAt /></Cell></Cells>
          </Row>
          {options.map(([name, on], i) => (
            <Row key={name}>
              <RowLabel htmlFor={`opt${i}`}>{name}</RowLabel>
              <Cells><Check id={`opt${i}`} type="checkbox" defaultChecked={on} /></Cells>
            </Row>
          ))}
          <PaletteFooter><FinishButton>Finish Sketch</FinishButton></PaletteFooter>
        </Palette>

        <Comments>
          <PanelBar>
            <CommentTitle>COMMENTS</CommentTitle>
            <BarButton aria-label="Expand comments"><Round plus /></BarButton>
            <Grip />
          </PanelBar>
        </Comments>

        <NavBar>
          {navTools.map((t) => (
            <NavButton key={t.name} $menu={t.menu} $wide={t.wide} aria-label={t.name}>{t.art}{t.menu && <Caret $s={6} />}</NavButton>
          ))}
        </NavBar>
      </Canvas>

      <Timeline>
        <Playback>
          {["M3 2V30M26 2V30L5 16Z", "M27 9V23M22 2V30L1 16Z", "M3 0V32L27 16Z", "M3 9V23M8 2V30L28 16Z", "M27 2V30M4 2V30L25 16Z"].map((d, i) => (
            <button key={d} aria-label={["To start", "Step back", "Play", "Step forward", "To end"][i]}>
              <Icon w={29} h={32}><path d={d} fill="#4f4f4f" stroke="#4f4f4f" strokeWidth={i === 2 ? 0 : 2} /></Icon>
            </button>
          ))}
        </Playback>
        <button aria-label="Sketch1">
          <Icon w={58} h={70}>
            <path d="M0 2H40V14H0Z" fill="#e38fe3" stroke="none" />
            <path d="M10 21H29M7 24V43M10 46H18M32 24V34" />
            <Dots at={[[6, 20], [32, 20], [6, 46]]} />
            <path d="M24 46L34 35" stroke="#fbbc45" strokeWidth="7" />
            <path d="M32 37L35 33" stroke="#f04a50" strokeWidth="6" />
            <path d="M22 50L24 46" stroke="#444" strokeWidth="4" />
            <path d="M22 55V70" stroke="#ccc" strokeWidth="4" />
            <path d="M32 6H56V13L46 23V70H42V23L32 13Z" fill="#666" stroke="none" />
          </Icon>
        </button>
        <Spacer />
        <button aria-label="Timeline settings"><Gear fill="#777" /></button>
      </Timeline>

      <Taskbar>
        {taskApps.map((a) => (
          <TaskButton key={a.name} $w={a.w} $on={a.on} aria-label={a.name}>{a.icon}{a.run && <Running />}</TaskButton>
        ))}
        <Spacer />
        <Tray>
          <Weather>
            <Icon w={44} h={40}><path d="M16 0C25 5 26 16 20 22C14 28 5 27 1 19C10 19 17 12 16 0Z" fill="#f9b60b" stroke="none" /><path d="M12 39C1 39 2 26 11 25C14 14 29 14 33 22C45 22 47 38 36 39Z" fill="#dde6f6" stroke="none" /></Icon>
            <span>26°C</span>
            <span>Mostly cl...</span>
          </Weather>
          {trayIcons.map(([name, art]) => <TrayButton key={name} aria-label={name}>{art}</TrayButton>)}
          <TrayButton>ENG</TrayButton>
          <TrayButton>9:53 PM</TrayButton>
          <TrayButton aria-label="Notifications"><Icon w={34}><path d="M0 0H32V22L22 26V32L14 26H0Z" fill="#fff" stroke="none" /><path d="M6 7H26M6 13H26M6 19H18" stroke="#132c3a" /><path d="M29 18C31 25 27 30 20 30C27 27 28 23 29 18Z" fill="#fff" stroke="#132c3a" strokeWidth="2" /></Icon></TrayButton>
        </Tray>
      </Taskbar>
    </Shell>
  );
}
